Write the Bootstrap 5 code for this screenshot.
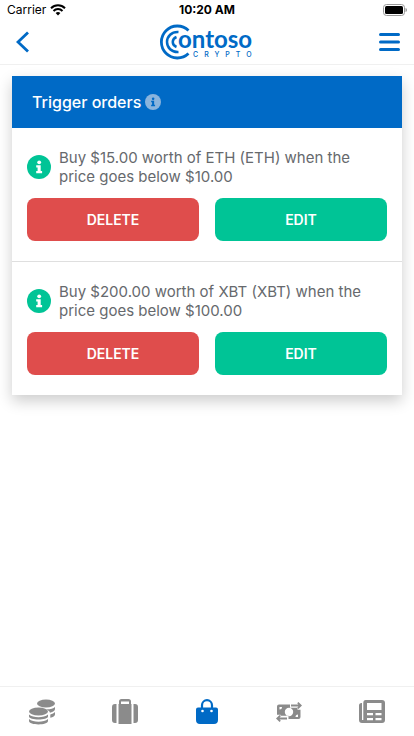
<!DOCTYPE html>
<html lang="en">
<head>
<meta charset="utf-8">
<meta name="viewport" content="width=device-width, initial-scale=1">
<title>Contoso Crypto – Trigger orders</title>
<link href="https://cdn.jsdelivr.net/npm/bootstrap@5.3.0/dist/css/bootstrap.min.css" rel="stylesheet">
<style>
  :root { --brand: #006ac6; --go: #00c496; --stop: #df4d4c; --ink: #66696d; --idle: #8b8b8b; --hair: #f0f0f0; }
  body { font-family: Inter, "Liberation Sans", sans-serif; color: var(--ink); background: #fff; }
  .status-bar { height: 20px; padding: 0 7px; font-size: 12px; line-height: 20px; color: #000; }
  .status-bar > * { flex: 1 1 0; }
  .top-bar { height: 45px; padding: 0 13px 0 16px; border-bottom: 1px solid var(--hair); }
  .icon-btn { line-height: 0; color: var(--brand); }
  .orders { margin: 11px 12px; border: 0; border-radius: 0; box-shadow: 0 6px 14px rgba(0, 0, 0, .2); }
  .orders-head { height: 52px; padding: 0 20px; background: var(--brand); color: #fff; }
  .orders-head h1 { font-size: 16px; line-height: 20px; font-weight: 500; }
  .order { padding: 20px 15px; border-color: #dfdfdf; color: var(--ink); }
  .order p { font-size: 15px; line-height: 19px; }
  .order-actions { margin-top: 12px; gap: 16px; }
  .btn-order { height: 43px; border: 0; border-radius: 8px; color: #fff; font-size: 14px; line-height: 20px; font-weight: 600; }
  .btn-order:hover { color: #fff; }
  .btn-stop, .btn-stop:hover { background: var(--stop); }
  .btn-go, .btn-go:hover { background: var(--go); }
  .tab-bar { height: 50px; border-top: 1px solid var(--hair); }
  .tab-bar .nav-link { color: var(--idle); line-height: 0; padding: 0; }
  .tab-bar .nav-link.active { color: var(--brand); }
  .glyph { fill: var(--glyph, #fff); }
  .info-muted { --glyph: #006ac6; fill: #8ab4dd; }
  .info-go { fill: var(--go); }
  .logo { overflow: visible; }
  .word { font: 700 24px Lato, sans-serif; }
  .tagline { font: 500 7px Inter, sans-serif; letter-spacing: 6px; }
</style>
<script src="https://cdn.jsdelivr.net/npm/bootstrap@5.3.0/dist/js/bootstrap.bundle.min.js" defer></script>
</head>
<body class="d-flex flex-column min-vh-100">
<svg class="d-none" aria-hidden="true">
  <symbol id="info" viewBox="0 0 24 24">
    <circle cx="12" cy="12" r="12"/>
    <g class="glyph"><circle cx="12.2" cy="7.3" r="1.9"/><path d="M9.2 10.200h4.500v5.800h1.400v2.200H9.200V16h1.400v-3.600H9.200z"/></g>
  </symbol>
</svg>

<div class="status-bar d-flex align-items-center">
  <div class="d-flex align-items-center gap-1">
    <span>Carrier</span>
    <svg width="16" height="12" viewBox="0 0 16 12" fill="none" stroke="#000" stroke-width="2" role="img" aria-label="Wi-Fi"><path d="M1 4.2a10 10 0 0 1 14 0M3.5 7a6.3 6.3 0 0 1 9 0"/><path d="M8 11.5 5.6 9.1a3.4 3.4 0 0 1 4.8 0z" fill="#000" stroke="none"/></svg>
  </div>
  <div class="text-center fw-bold">10:20 AM</div>
  <div class="d-flex justify-content-end">
    <svg width="24" height="12" viewBox="0 0 24 12" role="img" aria-label="Battery full"><rect x=".5" y=".5" width="21" height="11" rx="3" fill="none" stroke="#999"/><rect x="2" y="2" width="18" height="8" rx="1.5"/><path d="M22.5 4c2 .8 2 3.2 0 4z" fill="#999"/></svg>
  </div>
</div>

<header class="top-bar d-flex align-items-center justify-content-between">
  <button class="btn icon-btn border-0 p-0" type="button" aria-label="Back"><svg width="16" height="22" viewBox="0 0 16 22" fill="none" stroke="currentColor" stroke-width="2.8"><path d="M12 1.500 2 11l10 9.500"/></svg></button>
  <a href="#" class="icon-btn" aria-label="Contoso Crypto home">
    <svg class="logo" width="92" height="36" viewBox="0 0 92 36" fill="none" stroke="currentColor">
      <path d="M28.500 6.500A16 16 0 1 0 28.500 29.500" stroke-width="2.8"/>
      <path d="M18.500 8C11.500 7.500 7 12.500 7 18s4.500 10.500 11.500 10" stroke-width="2.5"/>
      <path d="M16.500 13c-5 2-5 8 0 10" stroke-width="2.5"/>
      <text class="word" x="18" y="24" fill="currentColor" stroke="none">ontoso</text>
      <text class="tagline" x="33" y="33" fill="currentColor" stroke="none">CRYPTO</text>
    </svg>
  </a>
  <button class="btn icon-btn border-0 p-0" type="button" aria-label="Menu"><svg width="22" height="20" viewBox="0 0 22 20" stroke="currentColor" stroke-width="3" stroke-linecap="round"><path d="M1.500 2.500h18M1.500 10h18M1.500 17.500h18"/></svg></button>
</header>

<main class="flex-grow-1">
  <section class="card orders">
    <div class="orders-head d-flex align-items-center gap-1">
      <h1 class="mb-0">Trigger orders</h1>
      <svg class="info-muted" width="16" height="16" role="img" aria-label="About trigger orders"><use href="#info"/></svg>
    </div>
    <ul class="list-group list-group-flush rounded-0">
      <li class="list-group-item order">
        <div class="d-flex align-items-center gap-2">
          <svg class="info-go flex-shrink-0" width="24" height="24" aria-hidden="true"><use href="#info"/></svg>
          <p class="mb-0">Buy $15.00 worth of ETH (ETH) when the price goes below $10.00</p>
        </div>
        <div class="order-actions d-flex">
          <button type="button" class="btn btn-order btn-stop flex-fill w-50">DELETE</button>
          <button type="button" class="btn btn-order btn-go flex-fill w-50">EDIT</button>
        </div>
      </li>
      <li class="list-group-item order">
        <div class="d-flex align-items-center gap-2">
          <svg class="info-go flex-shrink-0" width="24" height="24" aria-hidden="true"><use href="#info"/></svg>
          <p class="mb-0">Buy $200.00 worth of XBT (XBT) when the price goes below $100.00</p>
        </div>
        <div class="order-actions d-flex">
          <button type="button" class="btn btn-order btn-stop flex-fill w-50">DELETE</button>
          <button type="button" class="btn btn-order btn-go flex-fill w-50">EDIT</button>
        </div>
      </li>
    </ul>
  </section>
</main>

<nav class="tab-bar nav nav-fill align-items-center" aria-label="Main">
  <a class="nav-item nav-link" href="#" aria-label="Coins"><svg width="26" height="26" viewBox="0 0 26 26" fill="currentColor"><ellipse cx="17" cy="4.500" rx="9" ry="4"/><path d="M26 8v2c0 2-2 3-5 3.700-.5-1.500-2-2.700-4.500-3.400C21 10.500 24.500 9.500 26 8zM26 13v2.500c0 1.500-2 2.700-4.700 3.200v-3.200c2-.5 3.700-1.300 4.700-2.500z"/><ellipse cx="9.500" cy="12.500" rx="9.500" ry="4"/><path d="M0 15.500c4 3.500 15 3.500 19 0v2c0 4-19 4-19 0zM0 20c4 3.500 15 3.500 19 0v2c0 4.500-19 4.500-19 0z"/></svg></a>
  <a class="nav-item nav-link" href="#" aria-label="Portfolio"><svg width="26" height="26" viewBox="0 0 26 26" fill="currentColor"><path d="M4.500 5v19H3a3 3 0 0 1-3-3V8a3 3 0 0 1 3-3zM21.500 5v19H23a3 3 0 0 0 3-3V8a3 3 0 0 0-3-3z"/><path fill-rule="evenodd" d="M6.500 25V5h.5V2.500A2.500 2.500 0 0 1 9.500 0h7A2.500 2.500 0 0 1 19 2.500V5h.5v20zM9 5h8V2.500H9z"/></svg></a>
  <a class="nav-item nav-link active" aria-current="page" href="#" aria-label="Orders"><svg width="24" height="26" viewBox="0 0 24 26"><path d="M7 10V6.200a5 5 0 0 1 10 0V10" fill="none" stroke="currentColor" stroke-width="2.2"/><path d="M3 8.500h18a2 2 0 0 1 2 2V21a4 4 0 0 1-4 4H5a4 4 0 0 1-4-4V10.500a2 2 0 0 1 2-2z" fill="currentColor"/><circle cx="7.500" cy="12" r="1.300" fill="#fff"/><circle cx="16.500" cy="12" r="1.300" fill="#fff"/></svg></a>
  <a class="nav-item nav-link" href="#" aria-label="Trade"><svg width="26" height="20" viewBox="0 0 26 20" fill="currentColor"><path fill-rule="evenodd" d="M3 2.500h11v3.200h7.500v2h3V15a2 2 0 0 1-2 2H12.500v-3.200H4.500v-1H1V4.500a2 2 0 0 1 2-2zM13 5.800a4.200 4.200 0 1 0 0 8.400 4.200 4.200 0 0 0 0-8.400zM3.500 5v2.500A2.500 2.500 0 0 0 6 5zM22 15v-2.500a2.500 2.500 0 0 0-2.500 2.500z"/><path d="M15 3.500h9M21.800.7l3 2.800-3 2.800M11 16.500H2M4.200 13.700l-3 2.800 3 2.800" fill="none" stroke="currentColor" stroke-width="1.8"/></svg></a>
  <a class="nav-item nav-link" href="#" aria-label="News"><svg width="26" height="24" viewBox="0 0 26 24" fill="currentColor"><path fill-rule="evenodd" d="M7.500 0H23a3 3 0 0 1 3 3v17a3 3 0 0 1-3 3H3a3 3 0 0 1-3-3V5.500A2.500 2.500 0 0 1 2.500 3H3v17h1.300V3A3 3 0 0 1 7.500 0zM8 3v7h14.500V3zM8 13v2.300h6V13zM16.500 13v2.300h6V13zM8 18v2.300h6V18zM16.500 18v2.300h6V18z"/></svg></a>
</nav>
</body>
</html>
